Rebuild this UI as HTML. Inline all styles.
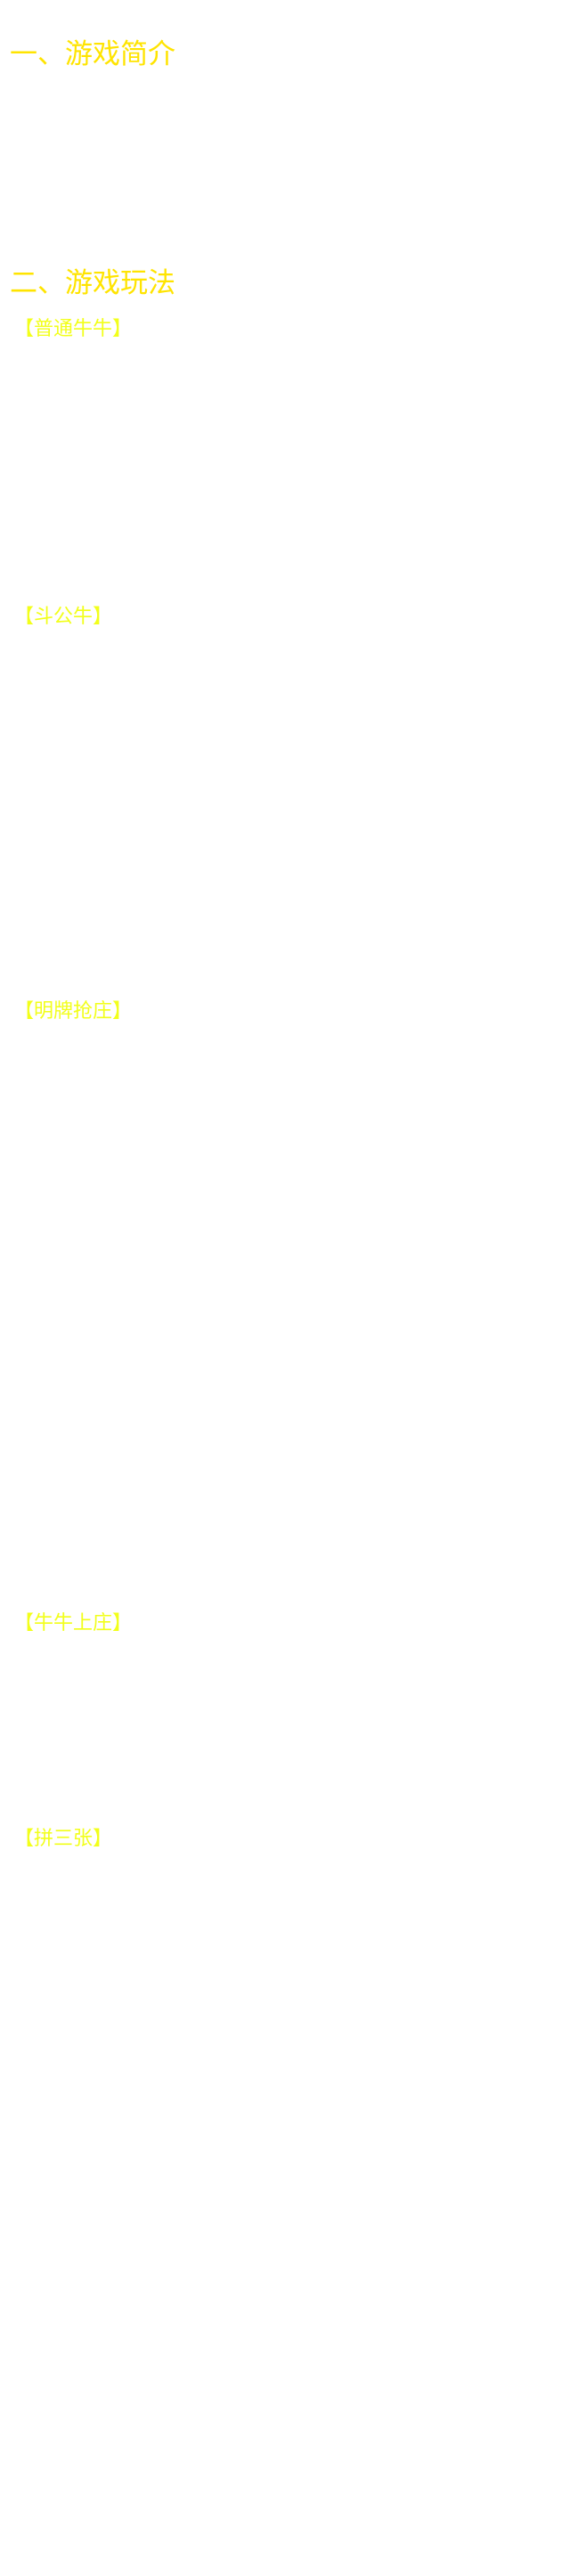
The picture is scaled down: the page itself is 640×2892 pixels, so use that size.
<!DOCTYPE html>
<html><head><meta charset="utf-8"><style>
html,body{margin:0;padding:0;background:#fff;width:640px;height:2892px;overflow:hidden}
body{position:relative;font-family:"Liberation Sans","Noto Sans CJK SC",sans-serif}
.h{position:absolute;left:11px;font-size:31px;line-height:1;color:#ffe400;white-space:nowrap}
.s{position:absolute;left:16px;font-size:22px;line-height:1;color:#f2ff1a;white-space:nowrap}
</style></head><body>
<div class="h" style="top:45px">一、游戏简介</div>
<div class="h" style="top:302px">二、游戏玩法</div>
<div class="s" style="top:358px">【普通牛牛】</div>
<div class="s" style="top:681px">【斗公牛】</div>
<div class="s" style="top:1124px">【明牌抢庄】</div>
<div class="s" style="top:1811px">【牛牛上庄】</div>
<div class="s" style="top:2053px">【拼三张】</div>
</body></html>
